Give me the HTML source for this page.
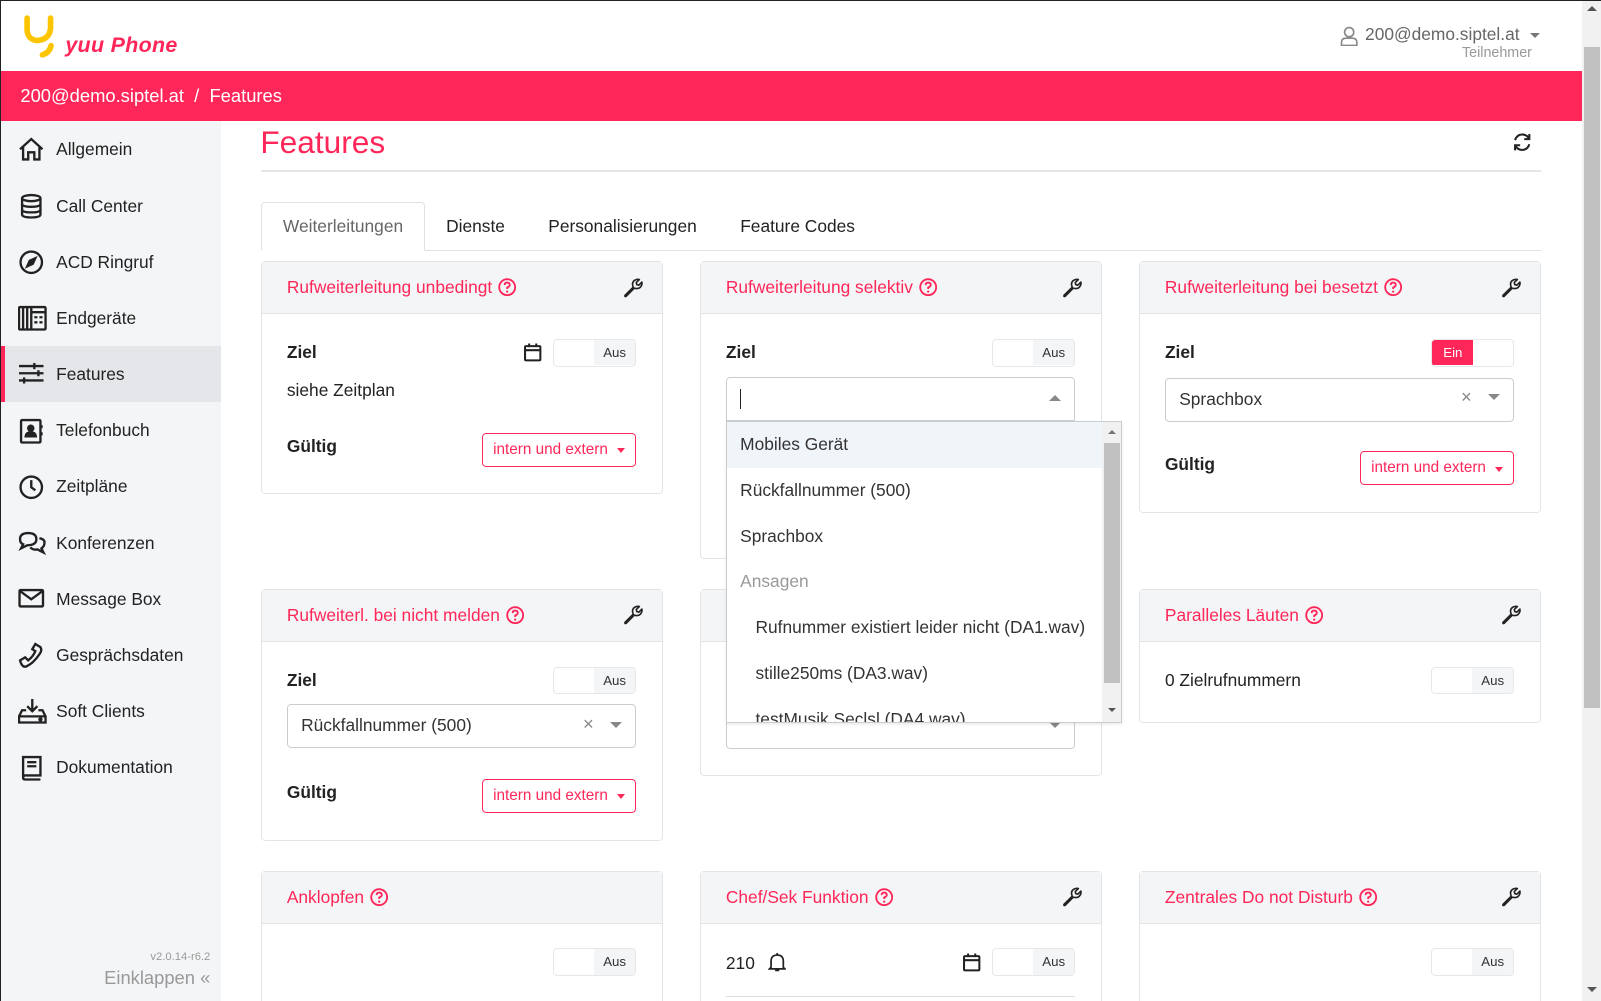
<!DOCTYPE html>
<html><head><meta charset="utf-8">
<style>
*{box-sizing:border-box;margin:0;padding:0}
html,body{width:1601px;height:1001px;overflow:hidden;background:#fff;font-family:"Liberation Sans",Arial,sans-serif;color:#222}
#w{zoom:1.021;width:1568px;height:981px;position:relative;border-top:1px solid #222;border-left:1px solid #222}
.a{position:absolute}
.red{color:#ff2759}
.hdr{left:0;top:0;width:1548px;height:69px;background:#fff}
.bar{left:0;top:69px;width:1548px;height:49px;background:#ff2759;color:#fff;font-size:18px;line-height:49px;padding-left:19px}
.sb{left:1548px;top:0;width:20px;height:981px;background:#f1f1f1}
.side{left:0;top:118px;width:215px;height:863px;background:#f4f5f7}
.it{position:absolute;left:0;width:215px;height:55px;font-size:17px;line-height:55px;padding-left:54px}
.it svg{position:absolute;left:17px;top:15px}
.it.act{background:#e4e6ea}
.it.act:before{content:"";position:absolute;left:0;top:0;width:4px;height:55px;background:#ff2759}
.card{position:absolute;width:393px;border:1px solid #e3e4e6;border-radius:4px;background:#fff}
.ch{height:51px;background:#f4f5f7;border-bottom:1px solid #e3e4e6;position:relative;color:#ff2759;font-size:17px;line-height:50px;padding-left:24px}
.ch .q{display:inline-block;vertical-align:middle;margin-left:6px;margin-top:-3px}
.ch .wr{position:absolute;right:18px;top:15px}
.lbl{position:absolute;font-weight:bold;font-size:17px}
.txt{position:absolute;font-size:17px}
.tg{position:absolute;width:81px;height:27px;border:1px solid #e6e7e9;border-radius:4px;overflow:hidden;background:#fff}
.tg span{position:absolute;right:0;top:0;width:40px;height:25px;background:#f4f5f7;font-size:13px;line-height:25px;text-align:center;color:#333}
.tg.on span{left:0;right:auto;background:#ff2759;color:#fff}
.btn{position:absolute;width:151px;height:33px;border:1px solid #ff2759;border-radius:4px;color:#ff2759;font-size:15px;line-height:31px;padding-left:10px}
.btn:after{content:"";position:absolute;right:10px;top:14px;border:4px solid transparent;border-top:5px solid #ff2759}
.sel{position:absolute;width:342px;height:43px;border:1px solid #ccc;border-radius:4px;font-size:17px;line-height:41px;padding-left:13px;color:#333;background:#fff}
.cd{position:absolute;width:0;height:0;border:6px solid transparent;border-top:6px solid #888}
.x{position:absolute;color:#888;font-size:18px}
.dd{left:710px;top:411px;width:388px;height:296px;border:1px solid #ccc;background:#fff;overflow:hidden;box-shadow:0 2px 3px rgba(0,0,0,.08)}
.dd div{height:45px;line-height:45px;font-size:17px;color:#333;padding-left:13px;width:368px}
</style></head><body><div id="w">
<div class="a hdr"></div>
<svg class="a" style="left:22px;top:14px" width="34" height="44" viewBox="0 0 34 44"><path d="M4 3 V14 Q4 24 14 25 Q26 24 27 13 V3" fill="none" stroke="#fcc500" stroke-width="5.5" stroke-linecap="round"/><path d="M19 39 Q26 37 27.5 30" fill="none" stroke="#fcc500" stroke-width="5.5" stroke-linecap="round"/></svg>
<div class="a red" style="left:63px;top:31px;font-size:21px;font-weight:bold;font-style:italic;letter-spacing:.3px">yuu Phone</div>
<svg class="a" style="left:1311px;top:24px" width="18" height="20" viewBox="0 0 18 20" fill="none" stroke="#888" stroke-width="1.6"><circle cx="9" cy="6" r="4.5"/><path d="M1.5 19 V16 Q1.5 12 6 12 H12 Q16.5 12 16.5 16 V19 Z"/></svg>
<div class="a" style="left:1336px;top:23px;font-size:17px;color:#666">200@demo.siptel.at</div>
<div class="a" style="left:1498px;top:31px;border:5px solid transparent;border-top:5px solid #777"></div>
<div class="a" style="left:1431px;top:43px;font-size:14px;color:#999">Teilnehmer</div>
<div class="a bar">200@demo.siptel.at&nbsp; /&nbsp; Features</div>
<div class="a sb"><div class="a" style="left:2px;top:45px;width:16px;height:647px;background:#c1c1c1"></div><div class="a" style="left:5px;top:5px;border:5px solid transparent;border-bottom:5px solid #555;border-top:0"></div><div class="a" style="left:5px;top:966px;border:5px solid transparent;border-top:5px solid #555;border-bottom:0"></div></div>

<div class="a side">
<div class="it" style="top:0"><svg width="26" height="24" viewBox="0 0 26 24" fill="none" stroke="#222" stroke-width="2.3"><path d="M2 12 L13 2 L24 12 M5 10 V22 H10 V15 H16 V22 H21 V10"/></svg>Allgemein</div>
<div class="it" style="top:55px"><svg width="26" height="26" viewBox="0 0 26 26" fill="none" stroke="#222" stroke-width="2.3"><ellipse cx="13" cy="5" rx="9" ry="3"/><path d="M4 5 V21 Q4 24 13 24 Q22 24 22 21 V5 M4 10.5 Q4 13.5 13 13.5 Q22 13.5 22 10.5 M4 16 Q4 19 13 19 Q22 19 22 16"/></svg>Call Center</div>
<div class="it" style="top:110px"><svg width="26" height="26" viewBox="0 0 26 26" fill="none" stroke="#222" stroke-width="2.3"><circle cx="13" cy="13" r="10.5"/><path d="M17 9 L14.5 14.5 L9 17 L11.5 11.5 Z" fill="#222"/></svg>ACD Ringruf</div>
<div class="it" style="top:165px"><svg width="28" height="26" viewBox="0 0 28 26" fill="none" stroke="#222" stroke-width="2.3"><rect x="1" y="2" width="26" height="22" rx="1"/><path d="M5 2 V24 M9 2 V24 M13 2 V24 M13 7 H27 M16 12h3 M21 12h3 M16 17h3 M21 17h3"/></svg>Endgeräte</div>
<div class="it act" style="top:220px"><svg width="26" height="24" viewBox="0 0 26 24" fill="none" stroke="#222" stroke-width="2.3"><path d="M1 5 H25 M1 12 H25 M1 19 H25 M16 2 V8 M20 9 V15 M6 16 V22"/></svg>Features</div>
<div class="it" style="top:275px"><svg width="26" height="26" viewBox="0 0 26 26" fill="none" stroke="#222" stroke-width="2.3"><rect x="3" y="2" width="19" height="22" rx="1"/><circle cx="12.5" cy="10" r="2.5" fill="#222"/><path d="M7.5 18 Q8 14 12.5 14 Q17 14 17.5 18 Z" fill="#222"/><path d="M23 7v3 M23 14v3"/></svg>Telefonbuch</div>
<div class="it" style="top:330px"><svg width="26" height="26" viewBox="0 0 26 26" fill="none" stroke="#222" stroke-width="2.3"><circle cx="13" cy="13" r="10.5"/><path d="M13 6 V13 L17 16"/></svg>Zeitpläne</div>
<div class="it" style="top:385px"><svg width="28" height="26" viewBox="0 0 28 26" fill="none" stroke="#222" stroke-width="2.3"><path d="M10 3 Q2 3 2 9 Q2 13 5 14 L3 18 L9 15 Q18 15 18 9 Q18 3 10 3 Z M12 17 Q15 20 19 19 L25 22 L23 18 Q26 16 26 12 Q26 9 21 8"/></svg>Konferenzen</div>
<div class="it" style="top:440px"><svg width="26" height="24" viewBox="0 0 26 24" fill="none" stroke="#222" stroke-width="2.3"><rect x="1.5" y="4" width="23" height="16" rx="1"/><path d="M2 5 L13 13 L24 5"/></svg>Message Box</div>
<div class="it" style="top:495px"><svg width="26" height="26" viewBox="0 0 26 26" fill="none" stroke="#222" stroke-width="2.3"><path d="M17 2 L22 5 Q24 8 21 12 Q15 21 8 24 Q5 25 3 21 L2 18 L7 15 L10 18 Q15 14 17 9 L14 7 Z"/></svg>Gesprächsdaten</div>
<div class="it" style="top:550px"><svg width="28" height="26" viewBox="0 0 28 26" fill="none" stroke="#222" stroke-width="2.3"><path d="M14 1 V13 M9 8 L14 13 L19 8 M8 12 H4 L1 18 V24 H27 V18 L24 12 H20 M1 18 H27"/><circle cx="22" cy="21" r="1" fill="#222"/></svg>Soft Clients</div>
<div class="it" style="top:605px"><svg width="26" height="26" viewBox="0 0 26 26" fill="none" stroke="#222" stroke-width="2.3"><path d="M5 22 V3 H22 V21 H7 Q5 21 5 23 Q5 25 7 25 H22 M9 8 H18 M9 12 H18"/></svg>Dokumentation</div>
<div class="a" style="right:10px;top:812px;font-size:11px;color:#999">v2.0.14-r6.2</div>
<div class="a" style="right:10px;top:828px;font-size:18px;color:#999">Einklappen «</div>
</div>

<div class="a red" style="left:254px;top:120px;font-size:31px">Features</div>
<svg class="a" style="left:1480px;top:128px" width="20" height="20" viewBox="0 0 20 20" fill="none" stroke="#222" stroke-width="2"><path d="M3 8 Q5 2 11 2.5 Q15 3 17 7 M17 2 V7 H12 M17 12 Q15 18 9 17.5 Q5 17 3 13 M3 18 V13 H8"/></svg>
<div class="a" style="left:255px;top:166px;width:1253px;height:1px;background:#e6e6e6"></div>
<div class="a" style="left:255px;top:244px;width:1253px;height:1px;background:#dee2e6"></div>
<div class="a" style="left:255px;top:197px;width:160px;height:48px;border:1px solid #dee2e6;border-bottom:1px solid #fff;border-radius:4px 4px 0 0;background:#fff;font-size:17px;color:#666;text-align:center;line-height:46px">Weiterleitungen</div>
<div class="a" style="left:436px;top:211px;font-size:17px">Dienste</div>
<div class="a" style="left:536px;top:211px;font-size:17px">Personalisierungen</div>
<div class="a" style="left:724px;top:211px;font-size:17px">Feature Codes</div>

<svg width="0" height="0" style="position:absolute"><defs>
<g id="q"><circle cx="9" cy="9" r="7.8" fill="none" stroke="#ff2759" stroke-width="1.8"/><path d="M6.5 7 Q6.5 4.5 9 4.5 Q11.5 4.5 11.5 6.8 Q11.5 8.3 9 9.3 V10.8" fill="none" stroke="#ff2759" stroke-width="1.8"/><circle cx="9" cy="13.3" r="1.1" fill="#ff2759"/></g>
<g id="wr"><path d="M2 17 L10 9 Q8 4 12 2 Q14 1 16 1.5 L13 4.5 L13.5 6.5 L15.5 7 L18.5 4 Q19 7 17 9 Q15 11 11 10 L3 18 Q1.5 18.5 2 17 Z" fill="none" stroke="#222" stroke-width="1.6" stroke-linejoin="round"/></g>
<g id="cal"><rect x="2" y="4" width="15" height="14" rx="1" fill="none" stroke="#222" stroke-width="2"/><path d="M2 8 H17 M6 1.5 V5 M13 1.5 V5" stroke="#222" stroke-width="2"/></g>
</defs></svg>

<!-- row1 -->
<div class="card" style="left:255px;top:255px;height:228px"><div class="ch">Rufweiterleitung unbedingt<svg class="q" width="18" height="18"><use href="#q"/></svg><svg class="wr" width="20" height="20"><use href="#wr"/></svg></div></div>
<div class="lbl" style="left:280px;top:334px">Ziel</div>
<svg class="a" style="left:511px;top:334px" width="20" height="20"><use href="#cal"/></svg>
<div class="tg" style="left:541px;top:331px"><span>Aus</span></div>
<div class="txt" style="left:280px;top:371px">siehe Zeitplan</div>
<div class="lbl" style="left:280px;top:426px">Gültig</div>
<div class="btn" style="left:471px;top:423px">intern und extern</div>

<div class="card" style="left:685px;top:255px;height:292px"><div class="ch">Rufweiterleitung selektiv<svg class="q" width="18" height="18"><use href="#q"/></svg><svg class="wr" width="20" height="20"><use href="#wr"/></svg></div></div>
<div class="lbl" style="left:710px;top:334px">Ziel</div>
<div class="tg" style="left:971px;top:331px"><span>Aus</span></div>

<div class="card" style="left:1115px;top:255px;height:246px"><div class="ch">Rufweiterleitung bei besetzt<svg class="q" width="18" height="18"><use href="#q"/></svg><svg class="wr" width="20" height="20"><use href="#wr"/></svg></div></div>
<div class="lbl" style="left:1140px;top:334px">Ziel</div>
<div class="tg on" style="left:1401px;top:331px"><span>Ein</span></div>
<div class="sel" style="left:1140px;top:369px">Sprachbox</div>
<div class="x" style="left:1430px;top:377px">×</div>
<div class="cd" style="left:1456px;top:385px"></div>
<div class="lbl" style="left:1140px;top:444px">Gültig</div>
<div class="btn" style="left:1331px;top:441px">intern und extern</div>

<!-- row2 -->
<div class="card" style="left:255px;top:576px;height:247px"><div class="ch">Rufweiterl. bei nicht melden<svg class="q" width="18" height="18"><use href="#q"/></svg><svg class="wr" width="20" height="20"><use href="#wr"/></svg></div></div>
<div class="lbl" style="left:280px;top:655px">Ziel</div>
<div class="tg" style="left:541px;top:652px"><span>Aus</span></div>
<div class="sel" style="left:280px;top:689px">Rückfallnummer (500)</div>
<div class="x" style="left:570px;top:697px">×</div>
<div class="cd" style="left:596px;top:706px"></div>
<div class="lbl" style="left:280px;top:765px">Gültig</div>
<div class="btn" style="left:471px;top:762px">intern und extern</div>

<div class="card" style="left:685px;top:576px;height:183px"><div class="ch"></div></div>
<div class="sel" style="left:710px;top:690px"></div>
<div class="cd" style="left:1026px;top:706px"></div>

<div class="card" style="left:1115px;top:576px;height:131px"><div class="ch">Paralleles Läuten<svg class="q" width="18" height="18"><use href="#q"/></svg><svg class="wr" width="20" height="20"><use href="#wr"/></svg></div></div>
<div class="txt" style="left:1140px;top:655px">0 Zielrufnummern</div>
<div class="tg" style="left:1401px;top:652px"><span>Aus</span></div>

<!-- row3 -->
<div class="card" style="left:255px;top:852px;height:140px"><div class="ch">Anklopfen<svg class="q" width="18" height="18"><use href="#q"/></svg></div></div>
<div class="tg" style="left:541px;top:928px"><span>Aus</span></div>
<div class="card" style="left:685px;top:852px;height:140px"><div class="ch">Chef/Sek Funktion<svg class="q" width="18" height="18"><use href="#q"/></svg><svg class="wr" width="20" height="20"><use href="#wr"/></svg></div></div>
<div class="txt" style="left:710px;top:932px">210</div>
<svg class="a" style="left:751px;top:931px" width="18" height="20" viewBox="0 0 18 20" fill="none" stroke="#222" stroke-width="1.7"><path d="M3 15 V9 Q3 3 9 3 Q15 3 15 9 V15 L16.5 16.5 H1.5 Z M9 1 V3 M7 18 H11"/></svg>
<svg class="a" style="left:941px;top:931px" width="20" height="20"><use href="#cal"/></svg>
<div class="tg" style="left:971px;top:928px"><span>Aus</span></div>
<div class="a" style="left:710px;top:975px;width:342px;height:1px;background:#ddd"></div>
<div class="card" style="left:1115px;top:852px;height:140px"><div class="ch">Zentrales Do not Disturb<svg class="q" width="18" height="18"><use href="#q"/></svg><svg class="wr" width="20" height="20"><use href="#wr"/></svg></div></div>
<div class="tg" style="left:1401px;top:928px"><span>Aus</span></div>

<!-- open select + dropdown -->
<div class="sel" style="left:710px;top:368px;border-radius:4px 4px 0 0"><span style="display:inline-block;width:1px;height:20px;background:#222;vertical-align:middle"></span></div>
<div class="a" style="left:1026px;top:386px;border:6px solid transparent;border-bottom:6px solid #888;border-top:0"></div>
<div class="a dd">
<div style="background:#f0f5fa">Mobiles Gerät</div>
<div>Rückfallnummer (500)</div>
<div>Sprachbox</div>
<div style="color:#999">Ansagen</div>
<div style="padding-left:28px">Rufnummer existiert leider nicht (DA1.wav)</div>
<div style="padding-left:28px">stille250ms (DA3.wav)</div>
<div style="padding-left:28px">testMusik Seclsl (DA4.wav)</div>
<span class="a" style="left:367px;top:0;width:20px;height:296px;background:#f1f1f1"></span>
<span class="a" style="left:369px;top:21px;width:16px;height:235px;background:#c1c1c1"></span>
<span class="a" style="left:373px;top:8px;border:4px solid transparent;border-bottom:4px solid #777;border-top:0"></span>
<span class="a" style="left:373px;top:280px;border:4px solid transparent;border-top:4px solid #555;border-bottom:0"></span>
</div>
</div></body></html>
